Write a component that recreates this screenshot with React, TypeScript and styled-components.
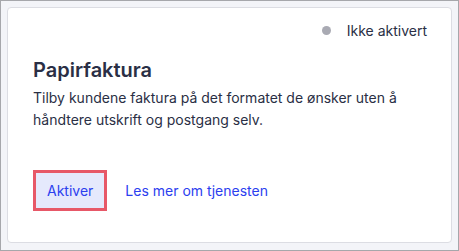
import styled, { createGlobalStyle } from "styled-components";

const Global = createGlobalStyle`
  html, body {
    margin: 0;
    padding: 0;
  }
  body {
    font-family: Inter, "Noto Sans", sans-serif;
    background: #fff;
  }
`;

const Frame = styled.div`
  box-sizing: border-box;
  width: 459px;
  height: 251px;
  border: 1px solid #a6a7ab;
  background: #f3f4f8;
  padding: 6px 6px 7px 6px;
  display: flex;
`;

const Card = styled.div`
  flex: 1;
  background: #ffffff;
  border: 1px solid #dcdde3;
  border-radius: 4px;
  padding: 14px 24px 0 25px;
  display: flex;
  flex-direction: column;
`;

const StatusRow = styled.div`
  display: flex;
  justify-content: flex-end;
  align-items: center;
  gap: 16px;
  font-size: 14px;
  color: #2a2f45;
`;

const Dot = styled.span`
  width: 9px;
  height: 9px;
  border-radius: 50%;
  background: #a9aab3;
`;

const Title = styled.h2`
  margin: 17px 0 0 0;
  font-size: 20px;
  font-weight: 600;
  color: #2a2f45;
  line-height: 28px;
`;

const Text = styled.p`
  margin: 3px 0 0 0;
  font-size: 14px;
  line-height: 22px;
  color: #2a2f45;
`;

const Actions = styled.div`
  margin-top: 39px;
  display: flex;
  align-items: center;
  gap: 18px;
`;

const Button = styled.button`
  box-sizing: border-box;
  height: 41px;
  padding: 0 11px;
  border: 3px solid #e75868;
  background: #e5e9fc;
  color: #2b40ef;
  font-family: inherit;
  font-size: 14px;
  font-weight: 400;
  cursor: pointer;
`;

const Link = styled.a`
  color: #2b40ef;
  font-size: 14px;
  font-weight: 400;
  text-decoration: none;
`;

export default function App() {
  return (
    <>
      <Global />
      <Frame>
        <Card>
          <StatusRow>
            <Dot />
            <span>Ikke aktivert</span>
          </StatusRow>
          <Title>Papirfaktura</Title>
          <Text>
            Tilby kundene faktura på det formatet de ønsker uten å håndtere
            utskrift og postgang selv.
          </Text>
          <Actions>
            <Button>Aktiver</Button>
            <Link href="#">Les mer om tjenesten</Link>
          </Actions>
        </Card>
      </Frame>
    </>
  );
}
